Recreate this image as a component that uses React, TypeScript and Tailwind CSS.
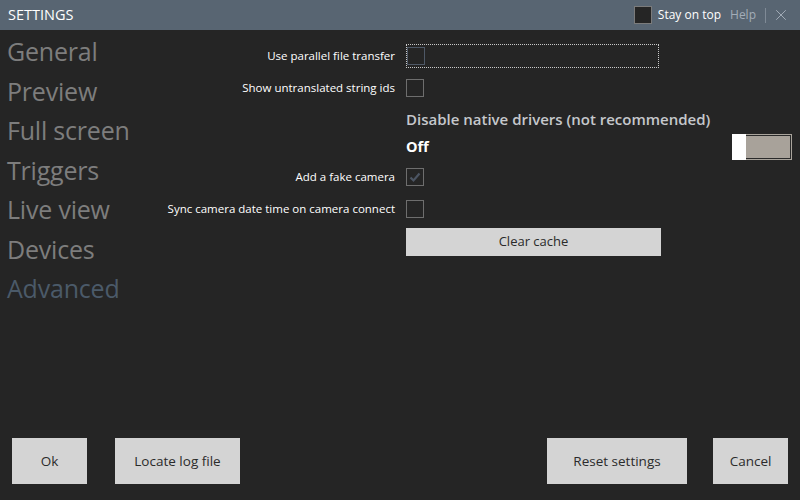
import { X } from 'lucide-react';

const navItems = ['General', 'Preview', 'Full screen', 'Triggers', 'Live view', 'Devices', 'Advanced'];

function Box({ checked = false, focused = false }: { checked?: boolean; focused?: boolean }) {
  return (
    <div
      className={`w-[18px] h-[18px] border flex items-center justify-center ${
        focused ? 'border-[#4e5866]' : 'border-[#6e6e6e]'
      }`}
    >
      {checked && (
        <svg className="w-[12px] h-[12px]" viewBox="0 0 12 12" fill="none">
          <path d="M1.5 6.5 L4.5 9.5 L10.5 2.5" stroke="#4c5563" strokeWidth={2.2} />
        </svg>
      )}
    </div>
  );
}

export default function App() {
  const font = { fontFamily: '"Open Sans", "Noto Sans", sans-serif' };

  return (
    <div className="w-[800px] h-[500px] bg-[#252525] flex flex-col overflow-hidden" style={font}>
      {/* Title bar */}
      <div className="h-[30px] bg-[#586572] flex items-center pl-[8px] pr-[10px]">
        <span className="text-[14.5px] text-white">SETTINGS</span>
        <div className="ml-auto flex items-center">
          <div className="w-[18px] h-[18px] bg-[#252525] border border-[#7b7b7b]" />
          <span className="ml-[6px] text-[12px] text-white">Stay on top</span>
          <span className="ml-[9px] text-[12px] text-[#a3adb8]">Help</span>
          <div className="ml-[9px] w-px h-[15px] bg-[#7f8a96]" />
          <X className="ml-[6px] w-[18px] h-[18px] text-[#a3adb8]" strokeWidth={1.3} />
        </div>
      </div>

      <div className="flex flex-1">
        {/* Nav */}
        <div className="w-[160px] pl-[7px] pt-[2px]">
          {navItems.map((item) => (
            <div
              key={item}
              className={`h-[39.5px] flex items-center text-[25px] tracking-[-0.2px] ${
                item === 'Advanced' ? 'text-[#4b5a69]' : 'text-[#7d7d7d]'
              }`}
            >
              {item}
            </div>
          ))}
        </div>

        {/* Form */}
        <div className="flex-1 pt-[14px] pr-[8px] text-[11.5px] text-white">
          <div className="grid grid-cols-[235px_1fr] gap-x-[11px] items-center">
            <div className="h-[24px] flex items-center justify-end">Use parallel file transfer</div>
            <div className="h-[24px] w-[253px] flex items-center pl-[1px] outline outline-1 outline-dotted outline-[#c9c9c9] -outline-offset-1">
              <Box focused />
            </div>

            <div className="h-[24px] mt-[8px] flex items-center justify-end">Show untranslated string ids</div>
            <div className="h-[24px] mt-[8px] flex items-center">
              <Box />
            </div>

            <div className="h-[22px] mt-[8px]" />
            <div className="h-[22px] mt-[8px] flex items-center text-[15px] font-semibold text-[#c5c8cc]">
              Disable native drivers (not recommended)
            </div>

            <div className="h-[28px] mt-[3px]" />
            <div className="h-[28px] mt-[3px] flex items-center">
              <span className="text-[14.5px] font-bold text-white">Off</span>
              <div className="ml-auto w-[60px] h-[26px] border border-[#a9a49c] flex items-stretch relative">
                <div className="flex-1 border border-[#2a2a2a] bg-[#a8a29a]" />
                <div className="absolute -left-px -top-px w-[14px] h-[26px] bg-white" />
              </div>
            </div>

            <div className="h-[24px] mt-[4px] flex items-center justify-end">Add a fake camera</div>
            <div className="h-[24px] mt-[4px] flex items-center">
              <Box checked />
            </div>

            <div className="h-[24px] mt-[8px] flex items-center justify-end">Sync camera date time on camera connect</div>
            <div className="h-[24px] mt-[8px] flex items-center">
              <Box />
            </div>

            <div className="mt-[7px]" />
            <button className="mt-[7px] w-[255px] h-[28px] bg-[#d4d4d4] text-[#2a2a2a] text-[13px]">
              Clear cache
            </button>
          </div>
        </div>
      </div>

      {/* Footer */}
      <div className="flex items-center px-[12px] pb-[16px] text-[13.5px] text-[#2b2b2b]">
        <button className="w-[75px] h-[46px] bg-[#d4d4d4]">Ok</button>
        <button className="ml-[28px] w-[125px] h-[46px] bg-[#d4d4d4]">Locate log file</button>
        <button className="ml-auto w-[140px] h-[46px] bg-[#d4d4d4]">Reset settings</button>
        <button className="ml-[26px] w-[75px] h-[46px] bg-[#d4d4d4]">Cancel</button>
      </div>
    </div>
  );
}
